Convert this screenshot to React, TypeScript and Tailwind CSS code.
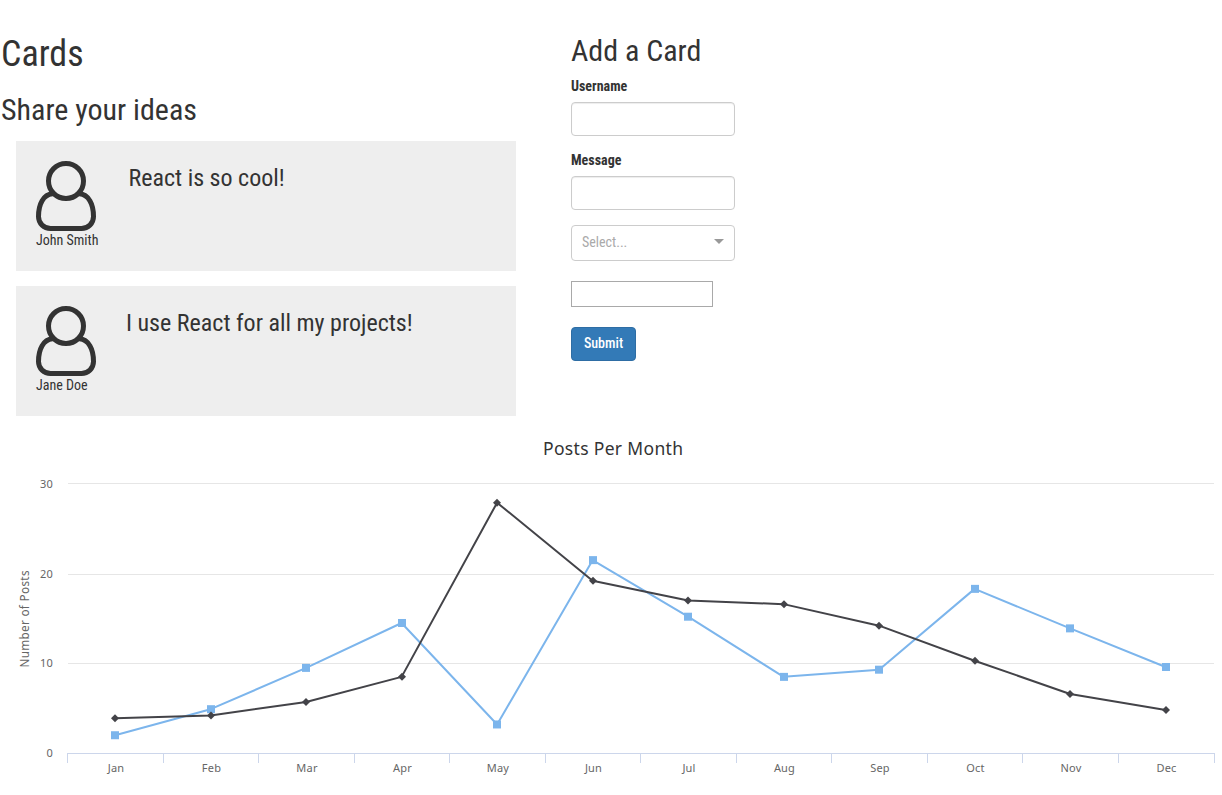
const months = ['Jan', 'Feb', 'Mar', 'Apr', 'May', 'Jun', 'Jul', 'Aug', 'Sep', 'Oct', 'Nov', 'Dec'];
const blue = [2, 4.9, 9.5, 14.5, 3.2, 21.5, 15.2, 8.5, 9.3, 18.3, 13.9, 9.6];
const dark = [3.9, 4.2, 5.7, 8.5, 27.9, 19.2, 17, 16.6, 14.2, 10.3, 6.6, 4.8];

const px = (i: number) => 115.1 + 95.5 * i;
const py = (v: number) => 322.2 - v * 8.98;
const line = (data: number[]) => data.map((v, i) => `${px(i)},${py(v)}`).join(' ');

const cards = [
  { name: 'John Smith', message: 'React is so cool!' },
  { name: 'Jane Doe', message: 'I use React for all my projects!' },
];

function UserIcon() {
  return (
    <svg width="60" height="70" viewBox="0 0 60 70" fill="none" stroke="#333" strokeWidth="5" className="block">
      <circle cx="30" cy="20" r="17.5" />
      <path d="M19 32.8H16.5C7.5 33.5 2.5 43 2.5 55.5C2.5 62.5 8 67.5 14.5 67.5H45.5C52 67.5 57.5 62.5 57.5 55.5C57.5 43 52.5 33.5 43.5 32.8H41" />
    </svg>
  );
}

function Field({ label }: { label: string }) {
  return (
    <div className="mb-[15px]">
      <label className="mb-[5px] block h-5 text-[14px] leading-[18px] font-bold">{label}</label>
      <input className="block h-[34px] w-[164px] rounded-[4px] border border-[#ccc] bg-white px-3 shadow-[inset_0_1px_1px_rgba(0,0,0,0.075)] outline-none" />
    </div>
  );
}

function Chart() {
  return (
    <svg width="1222" height="364" viewBox="0 0 1222 364" className="block font-['Noto_Sans','Open_Sans',sans-serif]">
      <text x="543" y="24" fontSize="17.5" fill="#333" textLength="140">Posts Per Month</text>
      {[52.5, 143.5, 232.5].map((y) => (
        <path key={y} d={`M68 ${y}H1214`} stroke="#e6e6e6" />
      ))}
      {[['30', 57], ['20', 147], ['10', 236], ['0', 326]].map(([t, y]) => (
        <text key={t} x="53.3" y={y} fontSize="11" fill="#666" textAnchor="end" letterSpacing=".4">{t}</text>
      ))}
      <text transform="translate(29 236.5) rotate(-90)" fontSize="11.7" fill="#666" textLength="97">Number of Posts</text>
      <path d="M67 322.5H1215" stroke="#ccd6eb" />
      {Array.from({ length: 13 }, (_, i) => (
        <path key={i} d={`M${Math.round(66.97 + i * 95.55) + 0.5} 322V332`} stroke="#ccd6eb" />
      ))}
      {months.map((m, i) => (
        <text key={m} x={px(i) + 0.9} y="341" fontSize="11" fill="#666" textAnchor="middle" letterSpacing=".2">{m}</text>
      ))}
      <polyline points={line(blue)} fill="none" stroke="#7cb5ec" strokeWidth="2" strokeLinejoin="round" />
      {blue.map((v, i) => (
        <rect key={i} x={Math.round(px(i)) - 4} y={py(v) - 4} width="8" height="8" fill="#7cb5ec" />
      ))}
      <polyline points={line(dark)} fill="none" stroke="#434348" strokeWidth="2" strokeLinejoin="round" />
      {dark.map((v, i) => (
        <path key={i} d={`M${Math.round(px(i))} ${py(v) - 4}l4 4l-4 4l-4 -4z`} fill="#434348" />
      ))}
    </svg>
  );
}

export default function App() {
  return (
    <div className="h-[795px] w-[1222px] overflow-hidden bg-white font-['Roboto_Condensed','Roboto',sans-serif] text-[#333] [font-stretch:75%]">
      <div className="flex h-[431px]">
        <section className="w-[571px] pt-[34px] pl-px">
          <h1 className="h-10 text-[36px] leading-10">Cards</h1>
          <h2 className="mt-[19px] mb-[15px] h-[33px] text-[30px] leading-[33px]">Share your ideas</h2>
          <div className="ml-[15px] flex flex-col gap-[15px]">
            {cards.map((c) => (
              <article key={c.name} className="flex h-[130px] w-[500px] bg-[#eee] p-5">
                <div>
                  <UserIcon />
                  <p className="text-[14px] leading-[18px] whitespace-nowrap">{c.name}</p>
                </div>
                <h3 className="pl-[30px] text-[24px] leading-[34px]">{c.message}</h3>
              </article>
            ))}
          </div>
        </section>
        <section className="pt-[34px]">
          <h2 className="mb-[10px] h-[33px] text-[30px] leading-[33px]">Add a Card</h2>
          <Field label="Username" />
          <Field label="Message" />
          <div className="flex h-9 w-[164px] items-center justify-between rounded-[4px] border border-[#ccc] pr-[10px] pl-[10px] text-[14px] text-[#aaa]">
            <span className="pb-[2px]">Select...</span>
            <span className="mb-[3px] border-x-5 border-t-5 border-x-transparent border-t-[#999]" />
          </div>
          <input className="mt-5 block h-[26px] w-[142px] border border-[#a9a9a9] outline-none" />
          <button className="mt-5 h-[34px] w-[65px] rounded-[4px] border border-[#2e6da4] bg-[#337ab7] pb-[2px] text-[14px] leading-5 font-medium text-white">Submit</button>
        </section>
      </div>
      <Chart />
    </div>
  );
}
